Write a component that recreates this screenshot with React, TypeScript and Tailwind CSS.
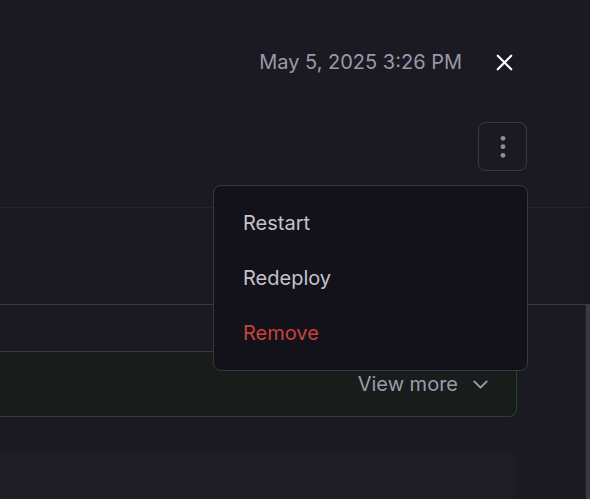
import { ChevronDown, X } from 'lucide-react';

const menuItems = [
	{ name: 'Restart', danger: false },
	{ name: 'Redeploy', danger: false },
	{ name: 'Remove', danger: true },
];

const KebabIcon = () => (
	<svg width="10" height="26" viewBox="0 0 10 26" fill="#8e8d99">
		<circle cx="5" cy="4.3" r="2.4" />
		<circle cx="5" cy="12.7" r="2.4" />
		<circle cx="5" cy="21.3" r="2.4" />
	</svg>
);

const App = () => {
	return (
		<div
			className="relative w-[590px] h-[499px] overflow-hidden bg-[#1b1a23] flex flex-col"
			style={{ fontFamily: 'Inter, "Noto Sans", sans-serif' }}>
			{/* top panel */}
			<div className="flex flex-col border-b border-[#25242e] h-[208px]">
				<div className="flex flex-row items-center justify-end pt-[48px] pr-[72px] h-[76px]">
					<span className="text-[20px] leading-[28px] text-[#9a98a6]">May 5, 2025 3:26 PM</span>
					<button className="ml-[28px] w-[28px] h-[28px] flex items-center justify-center text-white">
						<X size={27} strokeWidth={1.9} className="shrink-0" />
					</button>
				</div>
				<div className="flex flex-row justify-end pr-[63px] pt-[46px]">
					<button className="w-[49px] h-[49px] rounded-[8px] border border-[#3a3946] flex items-center justify-center">
						<KebabIcon />
					</button>
				</div>
			</div>
			<div className="h-[97px] bg-[#1a1921] border-b-[1.5px] border-[#393845]" />

			{/* scroll area */}
			<div className="flex-1 flex flex-row">
				<div className="flex-1 flex flex-col pt-[46px]">
					<div className="w-[517px] h-[66px] rounded-r-[8px] border-y border-r border-[#2a4330] bg-[#181d1c] flex flex-row items-center justify-end pr-[23px]">
						<span className="text-[20px] text-[#9d9ca6]">View more</span>
						<ChevronDown size={25} strokeWidth={1.8} className="ml-[10px] shrink-0 text-[#9d9ca6]" />
					</div>
					<div className="mt-[36px] w-[516px] flex-1 rounded-tr-[10px] bg-[#1e1d26]" />
				</div>
				<div className="w-[5px] bg-[#393846] border-l border-[#24232d]" />
			</div>

			{/* dropdown menu */}
			<div className="absolute left-[213px] top-[185px] w-[315px] h-[186px] rounded-[8px] border border-[#383744] bg-[#13121b] pt-[9px] flex flex-col">
				{menuItems.map((item) => (
					<div
						key={item.name}
						className={`h-[55px] flex items-center px-[29px] text-[20px] ${item.danger ? 'text-[#c9423a]' : 'text-[#c4c3cc]'}`}>
						{item.name}
					</div>
				))}
			</div>
		</div>
	);
};

export default App;
